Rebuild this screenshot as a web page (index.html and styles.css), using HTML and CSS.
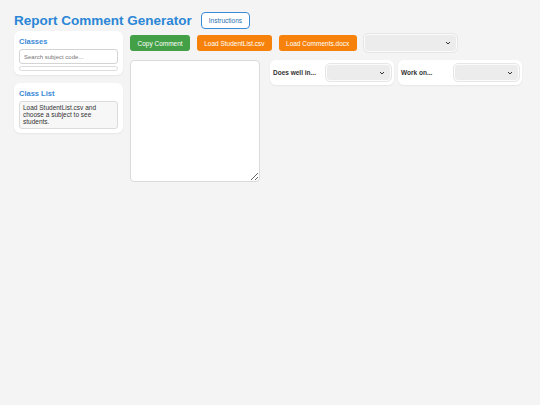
FILE: index.html
```html
<!doctype html>
<html>
<head>
    <meta charset="UTF-8">
    <title>Report Comment Generator</title>
    <link rel="stylesheet" href="styles.css">
</head>
<body>
    <div class="header">
        <h1 class="title">Report Comment Generator</h1>
        <button type="button" class="btn-instructions">Instructions</button>
    </div>
    <div class="layout">
        <div class="sidebar">
            <div class="card">
                <div class="card-title">Classes</div>
                <input type="text" class="search" placeholder="Search subject code...">
                <div class="class-list"></div>
            </div>
            <div class="card">
                <div class="card-title">Class List</div>
                <div class="students">Load StudentList.csv and choose a subject to see students.</div>
            </div>
        </div>
        <div class="main">
            <div class="toolbar">
                <button type="button" class="btn btn-green">Copy Comment</button>
                <button type="button" class="btn btn-orange">Load StudentList.csv</button>
                <button type="button" class="btn btn-orange">Load Comments.docx</button>
                <select class="select select-wide"></select>
            </div>
            <div class="workspace">
                <textarea class="comment"></textarea>
                <div class="pickers">
                    <div class="picker">
                        <label class="picker-label">Does well in...</label>
                        <select class="select select-small"></select>
                    </div>
                    <div class="picker">
                        <label class="picker-label">Work on...</label>
                        <select class="select select-small"></select>
                    </div>
                </div>
            </div>
        </div>
    </div>
</body>
</html>
```

FILE: styles.css
```css
body {
    margin: 0;
    padding: 12px 14px;
    background: #f4f4f4;
    font-family: "Liberation Sans", Arial, sans-serif;
    color: #222;
}

.header {
    display: flex;
    align-items: center;
    gap: 9px;
    height: 17px;
}

.title {
    margin: 0;
    font-size: 13.5px;
    font-weight: 700;
    color: #2b86d6;
}

.btn-instructions {
    height: 17px;
    padding: 0 7px;
    font-family: inherit;
    font-size: 6.5px;
    color: #2b6fb0;
    background: #fff;
    border: 1px solid #3a8ad8;
    border-radius: 4px;
}

.layout {
    display: flex;
    gap: 7px;
    margin-top: 2px;
}

.sidebar {
    width: 109px;
    display: flex;
    flex-direction: column;
    gap: 8px;
}

.card {
    background: #fff;
    border-radius: 6px;
    padding: 5px 5px 4px;
    box-shadow: 0 1px 2px rgba(0, 0, 0, 0.06);
}

.card-title {
    font-size: 7.5px;
    font-weight: 700;
    color: #3a8ad6;
    margin: 1px 0 3px;
}

.search {
    display: block;
    box-sizing: border-box;
    width: 100%;
    height: 15px;
    padding: 0 4px;
    font-family: inherit;
    font-size: 6px;
    border: 1px solid #d4d4d4;
    border-radius: 3px;
}

.search::placeholder {
    color: #777;
}

.class-list {
    height: 3px;
    margin-top: 2px;
    border: 1px solid #dcdcdc;
    border-radius: 3px;
}

.students {
    padding: 2px 3px 3px;
    font-size: 6.5px;
    line-height: 7px;
    color: #333;
    background: #f7f7f7;
    border: 1px solid #dcdcdc;
    border-radius: 3px;
}

.main {
    flex: 1;
}

.toolbar {
    display: flex;
    align-items: center;
    gap: 6.5px;
    margin-top: 3px;
}

.btn {
    height: 16px;
    padding: 0 7.5px;
    font-family: inherit;
    font-size: 6.5px;
    color: #fff;
    border: 0;
    border-radius: 3px;
}

.btn-green {
    background: #43a047;
}

.btn-orange {
    background: #f7820b;
}

.select {
    appearance: none;
    font-family: inherit;
    font-size: 7px;
    background: #ececec url("data:image/svg+xml,%3Csvg xmlns='http://www.w3.org/2000/svg' width='6' height='4' viewBox='0 0 6 4'%3E%3Cpath d='M1 1l2 2 2-2' fill='none' stroke='%23333' stroke-width='1'/%3E%3C/svg%3E") no-repeat right 5px center;
    border: 1px solid #fbfbfb;
    border-radius: 4px;
    outline: 1px solid #e6e6e6;
}

.select-wide {
    width: 93px;
    height: 18px;
    margin-left: 1px;
}

.workspace {
    display: flex;
    align-items: flex-start;
    gap: 10px;
    margin-top: 8px;
}

.comment {
    box-sizing: border-box;
    width: 130px;
    height: 122px;
    margin: 0;
    border: 1px solid #dadada;
    border-radius: 4px;
    background: #fff;
}

.pickers {
    display: flex;
    gap: 4px;
}

.picker {
    display: flex;
    align-items: center;
    justify-content: space-between;
    width: 118px;
    height: 17px;
    padding: 4px 3px;
    background: #fff;
    border-radius: 6px;
    box-shadow: 0 1px 2px rgba(0, 0, 0, 0.06);
}

.picker-label {
    font-size: 6.5px;
    font-weight: 700;
    color: #333;
}

.select-small {
    width: 65px;
    height: 17px;
}
```
